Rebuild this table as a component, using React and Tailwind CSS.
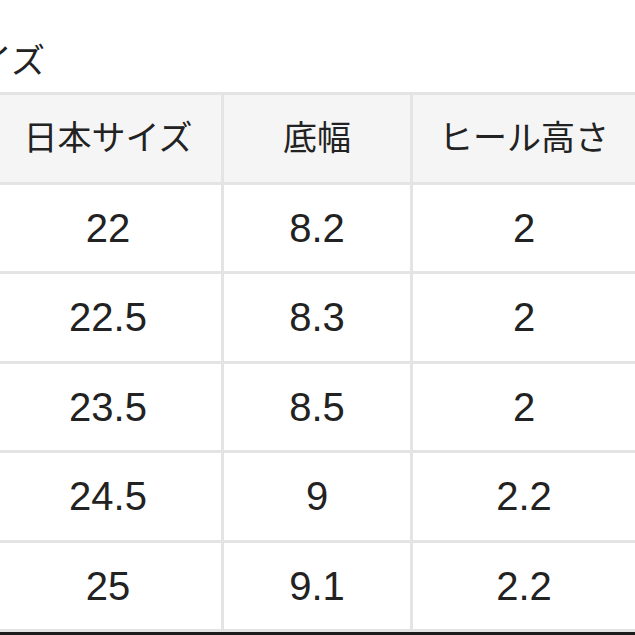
const rows = [
  ["22", "8.2", "2"],
  ["22.5", "8.3", "2"],
  ["23.5", "8.5", "2"],
  ["24.5", "9", "2.2"],
  ["25", "9.1", "2.2"],
];

const headers = ["日本サイズ", "底幅", "ヒール高さ"];

export default function App() {
  return (
    <div
      className="relative h-[635px] w-[635px] overflow-hidden bg-white text-[#222]"
      style={{ fontFamily: '"Liberation Sans", "Noto Sans CJK JP", sans-serif' }}
    >
      {/* Title */}
      <div className="h-[92px] pt-[40px]">
        <div className="ml-[-56px] text-[34px] leading-[42px]">サイズ</div>
      </div>

      {/* Table */}
      <div className="ml-[-8px] grid w-[646px] grid-cols-[226px_186px_222px] gap-[3px] bg-[#e4e4e4] p-[3px]">
        {headers.map((h) => (
          <div
            key={h}
            className="flex h-[86.5px] items-center justify-center bg-[#f5f5f5] text-[34px]"
          >
            {h}
          </div>
        ))}
        {rows.map((r) =>
          r.map((v, i) => (
            <div
              key={r[0] + i}
              className="flex h-[86.5px] items-center justify-center bg-white text-[40px]"
            >
              {v}
            </div>
          ))
        )}
      </div>

      <div className="h-[10px] bg-[#1c1c1c]" />
    </div>
  );
}
